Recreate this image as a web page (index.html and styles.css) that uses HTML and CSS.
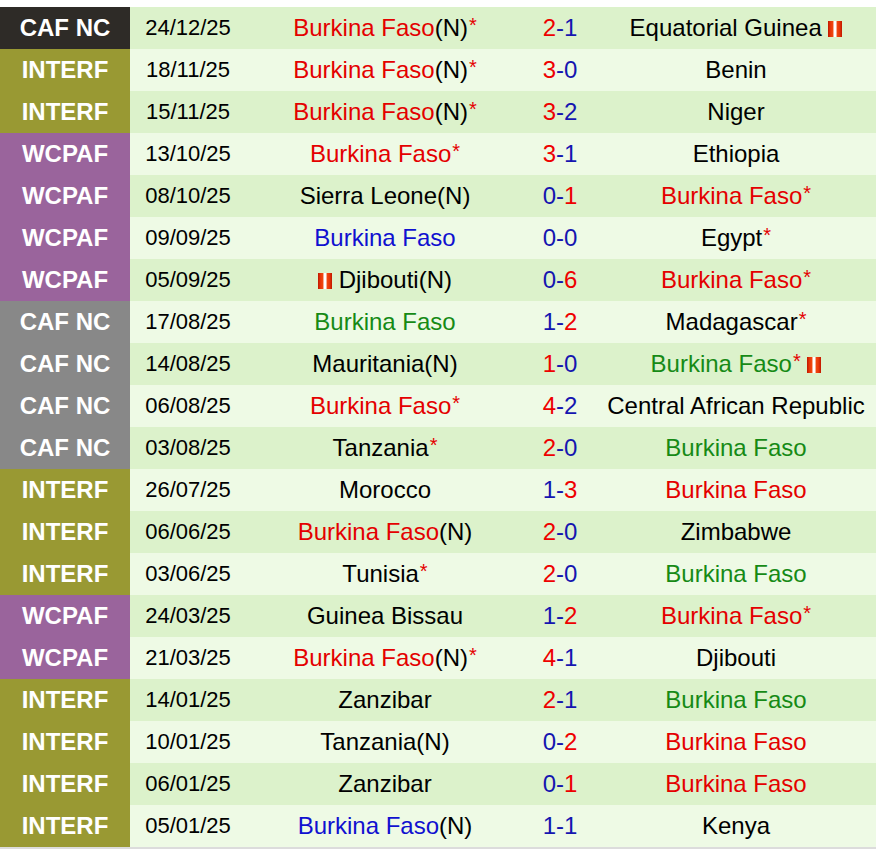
FILE: index.html
```html
<!DOCTYPE html>
<html>
<head>
<meta charset="utf-8">
<link rel="stylesheet" href="styles.css">
</head>
<body>
<table class="matches">
<colgroup><col class="c-comp"><col class="c-date"><col class="c-home"><col class="c-score"><col class="c-away"></colgroup>
<tbody>
<tr><td class="comp caf-dark">CAF NC</td><td class="date">24/12/25</td><td class="team"><span class="win">Burkina Faso</span>(N)<span class="star">*</span></td><td class="score"><span class="w">2</span>-<span>1</span></td><td class="team">Equatorial Guinea <span class="card"></span></td></tr>
<tr><td class="comp interf">INTERF</td><td class="date">18/11/25</td><td class="team"><span class="win">Burkina Faso</span>(N)<span class="star">*</span></td><td class="score"><span class="w">3</span>-<span>0</span></td><td class="team">Benin</td></tr>
<tr><td class="comp interf">INTERF</td><td class="date">15/11/25</td><td class="team"><span class="win">Burkina Faso</span>(N)<span class="star">*</span></td><td class="score"><span class="w">3</span>-<span>2</span></td><td class="team">Niger</td></tr>
<tr><td class="comp wcpaf">WCPAF</td><td class="date">13/10/25</td><td class="team"><span class="win">Burkina Faso</span><span class="star">*</span></td><td class="score"><span class="w">3</span>-<span>1</span></td><td class="team">Ethiopia</td></tr>
<tr><td class="comp wcpaf">WCPAF</td><td class="date">08/10/25</td><td class="team">Sierra Leone(N)</td><td class="score"><span>0</span>-<span class="w">1</span></td><td class="team"><span class="win">Burkina Faso</span><span class="star">*</span></td></tr>
<tr><td class="comp wcpaf">WCPAF</td><td class="date">09/09/25</td><td class="team"><span class="draw">Burkina Faso</span></td><td class="score"><span>0</span>-<span>0</span></td><td class="team">Egypt<span class="star">*</span></td></tr>
<tr><td class="comp wcpaf">WCPAF</td><td class="date">05/09/25</td><td class="team"><span class="card"></span> Djibouti(N)</td><td class="score"><span>0</span>-<span class="w">6</span></td><td class="team"><span class="win">Burkina Faso</span><span class="star">*</span></td></tr>
<tr><td class="comp caf">CAF NC</td><td class="date">17/08/25</td><td class="team"><span class="loss">Burkina Faso</span></td><td class="score"><span>1</span>-<span class="w">2</span></td><td class="team">Madagascar<span class="star">*</span></td></tr>
<tr><td class="comp caf">CAF NC</td><td class="date">14/08/25</td><td class="team">Mauritania(N)</td><td class="score"><span class="w">1</span>-<span>0</span></td><td class="team"><span class="loss">Burkina Faso</span><span class="star">*</span> <span class="card"></span></td></tr>
<tr><td class="comp caf">CAF NC</td><td class="date">06/08/25</td><td class="team"><span class="win">Burkina Faso</span><span class="star">*</span></td><td class="score"><span class="w">4</span>-<span>2</span></td><td class="team">Central African Republic</td></tr>
<tr><td class="comp caf">CAF NC</td><td class="date">03/08/25</td><td class="team">Tanzania<span class="star">*</span></td><td class="score"><span class="w">2</span>-<span>0</span></td><td class="team"><span class="loss">Burkina Faso</span></td></tr>
<tr><td class="comp interf">INTERF</td><td class="date">26/07/25</td><td class="team">Morocco</td><td class="score"><span>1</span>-<span class="w">3</span></td><td class="team"><span class="win">Burkina Faso</span></td></tr>
<tr><td class="comp interf">INTERF</td><td class="date">06/06/25</td><td class="team"><span class="win">Burkina Faso</span>(N)</td><td class="score"><span class="w">2</span>-<span>0</span></td><td class="team">Zimbabwe</td></tr>
<tr><td class="comp interf">INTERF</td><td class="date">03/06/25</td><td class="team">Tunisia<span class="star">*</span></td><td class="score"><span class="w">2</span>-<span>0</span></td><td class="team"><span class="loss">Burkina Faso</span></td></tr>
<tr><td class="comp wcpaf">WCPAF</td><td class="date">24/03/25</td><td class="team">Guinea Bissau</td><td class="score"><span>1</span>-<span class="w">2</span></td><td class="team"><span class="win">Burkina Faso</span><span class="star">*</span></td></tr>
<tr><td class="comp wcpaf">WCPAF</td><td class="date">21/03/25</td><td class="team"><span class="win">Burkina Faso</span>(N)<span class="star">*</span></td><td class="score"><span class="w">4</span>-<span>1</span></td><td class="team">Djibouti</td></tr>
<tr><td class="comp interf">INTERF</td><td class="date">14/01/25</td><td class="team">Zanzibar</td><td class="score"><span class="w">2</span>-<span>1</span></td><td class="team"><span class="loss">Burkina Faso</span></td></tr>
<tr><td class="comp interf">INTERF</td><td class="date">10/01/25</td><td class="team">Tanzania(N)</td><td class="score"><span>0</span>-<span class="w">2</span></td><td class="team"><span class="win">Burkina Faso</span></td></tr>
<tr><td class="comp interf">INTERF</td><td class="date">06/01/25</td><td class="team">Zanzibar</td><td class="score"><span>0</span>-<span class="w">1</span></td><td class="team"><span class="win">Burkina Faso</span></td></tr>
<tr><td class="comp interf">INTERF</td><td class="date">05/01/25</td><td class="team"><span class="draw">Burkina Faso</span>(N)</td><td class="score"><span>1</span>-<span>1</span></td><td class="team">Kenya</td></tr>
</tbody>
</table>
</body>
</html>
```
FILE: styles.css
```css
html, body {
  margin: 0;
  padding: 0;
  background: #ffffff;
}
body {
  padding-top: 7px;
  font-family: "Liberation Sans", Arial, sans-serif;
}
.matches {
  width: 876px;
  border-collapse: collapse;
  table-layout: fixed;
  border-bottom: 2px solid #dcdcdc;
}
.c-comp { width: 130px; }
.c-date { width: 116px; }
.c-home { width: 278px; }
.c-score { width: 72px; }
.c-away { width: 280px; }
.matches td {
  height: 42px;
  padding: 0;
  text-align: center;
  vertical-align: middle;
  white-space: nowrap;
  color: #000;
  font-size: 24px;
  line-height: 28px;
}
.matches tr:nth-child(odd) td { background: #dcf2cb; }
.matches tr:nth-child(even) td { background: #eefae5; }
.matches tr td.comp {
  color: #fff;
  font-weight: bold;
  font-size: 24px;
}
.matches tr td.comp.caf-dark { background: #2e2b27; }
.matches tr td.comp.caf { background: #888888; }
.matches tr td.comp.interf { background: #999933; }
.matches tr td.comp.wcpaf { background: #9a649c; }
.matches td.date {
  font-size: 22px;
}
.win { color: #e40000; }
.loss { color: #168a16; }
.draw { color: #1010d0; }
.star {
  color: #e40000;
  font-size: 20px;
  position: relative;
  top: -4px;
  margin-left: 1px;
}
.matches td.score { color: #1515b0; }
.matches td.score .w { color: #ee0000; }
.card {
  display: inline-block;
  width: 14px;
  height: 16px;
  vertical-align: -1px;
  background: linear-gradient(90deg, #c01800 0%, #e83608 18%, #f04a10 36%, #ffffff 42%, #ffffff 58%, #f04a10 64%, #e83608 82%, #c01800 100%);
}
```
